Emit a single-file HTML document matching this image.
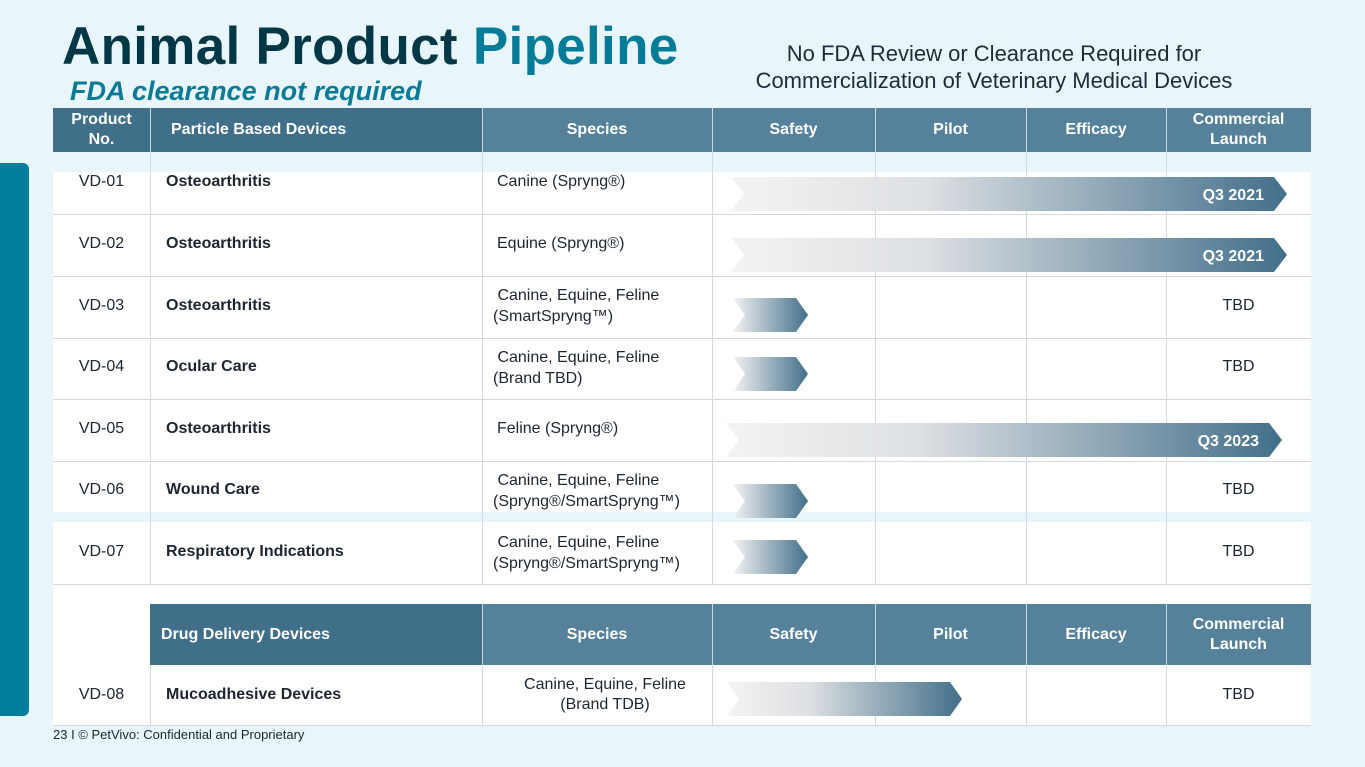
<!DOCTYPE html>
<html><head><meta charset="utf-8"><style>
*{margin:0;padding:0;box-sizing:border-box}
body{width:1365px;height:767px;background:#e8f6fc;position:relative;overflow:hidden;font-family:"Liberation Sans",sans-serif;color:#1c2530}
.a{position:absolute}
.h{position:absolute;color:#fff;font-weight:bold;font-size:16px;display:flex;align-items:center;justify-content:center;text-align:center;line-height:20px}
.c{position:absolute;font-size:16px;display:flex;align-items:center;line-height:20px}
.vl{position:absolute;width:1px;background:#d6d9dc}
.hl{position:absolute;height:1px;background:#d6d9dc}
.hv{position:absolute;width:1px;background:#c8d6de}
</style></head><body>
<div class="a" style="left:0;top:163px;width:29px;height:553px;background:#017e9b;border-radius:0 6px 6px 0"></div>
<div class="a" style="left:62px;top:16px;font-size:53px;font-weight:bold;color:#023845;letter-spacing:0.3px">Animal Product <span style="color:#047c98">Pipeline</span></div>
<div class="a" style="left:70px;top:76px;font-size:27px;font-weight:bold;font-style:italic;color:#0a7a96">FDA clearance not required</div>
<div class="a" style="left:700px;top:40px;width:588px;text-align:center;font-size:22px;line-height:27px;color:#1d2b3a">No FDA Review or Clearance Required for<br>Commercialization of Veterinary Medical Devices</div>

<div class="a" style="left:53px;top:172px;width:1258px;height:340px;background:#fff"></div>
<div class="a" style="left:53px;top:522px;width:1258px;height:82px;background:#fff"></div>
<div class="a" style="left:53px;top:604px;width:97px;height:121px;background:#fff"></div>
<div class="a" style="left:150px;top:665px;width:1161px;height:60px;background:#fff"></div>

<div class="h" style="left:53px;top:108px;width:97px;height:44px;background:#406f8a">Product<br>No.</div>
<div class="h" style="left:150px;top:108px;width:332px;height:44px;background:#406f8a;justify-content:flex-start;padding-left:21px">Particle Based Devices</div>
<div class="h" style="left:482px;top:108px;width:230px;height:44px;background:#55829a">Species</div>
<div class="h" style="left:712px;top:108px;width:163px;height:44px;background:#55829a">Safety</div>
<div class="h" style="left:875px;top:108px;width:151px;height:44px;background:#55829a">Pilot</div>
<div class="h" style="left:1026px;top:108px;width:140px;height:44px;background:#55829a">Efficacy</div>
<div class="h" style="left:1166px;top:108px;width:145px;height:44px;background:#55829a">Commercial<br>Launch</div>

<div class="h" style="left:150px;top:604px;width:332px;height:61px;background:#406f8a;justify-content:flex-start;padding-left:11px">Drug Delivery Devices</div>
<div class="h" style="left:482px;top:604px;width:230px;height:61px;background:#55829a">Species</div>
<div class="h" style="left:712px;top:604px;width:163px;height:61px;background:#55829a">Safety</div>
<div class="h" style="left:875px;top:604px;width:151px;height:61px;background:#55829a">Pilot</div>
<div class="h" style="left:1026px;top:604px;width:140px;height:61px;background:#55829a">Efficacy</div>
<div class="h" style="left:1166px;top:604px;width:145px;height:61px;background:#55829a">Commercial<br>Launch</div>

<div class="hv" style="left:150px;top:108px;height:44px"></div>
<div class="hv" style="left:482px;top:108px;height:44px"></div>
<div class="hv" style="left:712px;top:108px;height:44px"></div>
<div class="hv" style="left:875px;top:108px;height:44px"></div>
<div class="hv" style="left:1026px;top:108px;height:44px"></div>
<div class="hv" style="left:1166px;top:108px;height:44px"></div>
<div class="hv" style="left:482px;top:604px;height:61px"></div>
<div class="hv" style="left:712px;top:604px;height:61px"></div>
<div class="hv" style="left:875px;top:604px;height:61px"></div>
<div class="hv" style="left:1026px;top:604px;height:61px"></div>
<div class="hv" style="left:1166px;top:604px;height:61px"></div>

<div class="vl" style="left:150px;top:152px;height:432px"></div>
<div class="vl" style="left:482px;top:152px;height:432px"></div>
<div class="vl" style="left:712px;top:152px;height:432px"></div>
<div class="vl" style="left:875px;top:152px;height:432px"></div>
<div class="vl" style="left:1026px;top:152px;height:432px"></div>
<div class="vl" style="left:1166px;top:152px;height:432px"></div>
<div class="vl" style="left:150px;top:665px;height:60px"></div>
<div class="vl" style="left:482px;top:665px;height:60px"></div>
<div class="vl" style="left:712px;top:665px;height:60px"></div>
<div class="vl" style="left:875px;top:665px;height:60px"></div>
<div class="vl" style="left:1026px;top:665px;height:60px"></div>
<div class="vl" style="left:1166px;top:665px;height:60px"></div>
<div class="hl" style="left:53px;top:214px;width:1258px"></div>
<div class="hl" style="left:53px;top:276px;width:1258px"></div>
<div class="hl" style="left:53px;top:338px;width:1258px"></div>
<div class="hl" style="left:53px;top:399px;width:1258px"></div>
<div class="hl" style="left:53px;top:461px;width:1258px"></div>
<div class="hl" style="left:53px;top:584px;width:1258px"></div>
<div class="hl" style="left:53px;top:725px;width:1258px"></div>

<svg class="a" style="left:0;top:0" width="1365" height="767">
<defs><linearGradient id="g" x1="0" x2="1"><stop offset="0" stop-color="#f3f3f3"/><stop offset="0.35" stop-color="#dde0e3"/><stop offset="1" stop-color="#426f8a"/></linearGradient>
<linearGradient id="g2" x1="0" x2="1"><stop offset="0" stop-color="#f3f3f3"/><stop offset="1" stop-color="#426f8a"/></linearGradient></defs>
<polygon fill="url(#g)" points="731,177 1274,177 1287,194 1274,211 731,211 744,194"/>
<polygon fill="url(#g)" points="731,238 1274,238 1287,255 1274,272 731,272 744,255"/>
<polygon fill="url(#g)" points="726,423 1269,423 1282,440 1269,457 726,457 739,440"/>
<polygon fill="url(#g2)" points="733,298 796,298 808,315 796,332 733,332 745,315"/>
<polygon fill="url(#g2)" points="733,357 796,357 808,374 796,391 733,391 745,374"/>
<polygon fill="url(#g2)" points="733,484 796,484 808,501 796,518 733,518 745,501"/>
<polygon fill="url(#g2)" points="733,540 796,540 808,557 796,574 733,574 745,557"/>
<polygon fill="url(#g)" points="727,682 950,682 962,699 950,716 727,716 739,699"/>
<g fill="#fff" font-family="Liberation Sans" font-weight="bold" font-size="16">
<text x="1264" y="200" text-anchor="end">Q3 2021</text>
<text x="1264" y="261" text-anchor="end">Q3 2021</text>
<text x="1259" y="446" text-anchor="end">Q3 2023</text>
</g>
</svg>

<div class="c" style="left:53px;top:172px;width:97px;height:20px;justify-content:center">VD-01</div>
<div class="c" style="left:166px;top:172px;height:20px;font-weight:bold">Osteoarthritis</div>
<div class="c" style="left:497px;top:172px;height:20px">Canine (Spryng®)</div>

<div class="c" style="left:53px;top:234px;width:97px;height:20px;justify-content:center">VD-02</div>
<div class="c" style="left:166px;top:234px;height:20px;font-weight:bold">Osteoarthritis</div>
<div class="c" style="left:497px;top:234px;height:20px">Equine (Spryng®)</div>

<div class="c" style="left:53px;top:296px;width:97px;height:20px;justify-content:center">VD-03</div>
<div class="c" style="left:166px;top:296px;height:20px;font-weight:bold">Osteoarthritis</div>
<div class="c" style="left:493px;top:285px;display:block;line-height:21px">&nbsp;Canine, Equine, Feline<br>(SmartSpryng™)</div>
<div class="c" style="left:1166px;top:296px;width:145px;height:20px;justify-content:center">TBD</div>

<div class="c" style="left:53px;top:357px;width:97px;height:20px;justify-content:center">VD-04</div>
<div class="c" style="left:166px;top:357px;height:20px;font-weight:bold">Ocular Care</div>
<div class="c" style="left:493px;top:347px;display:block;line-height:21px">&nbsp;Canine, Equine, Feline<br>(Brand TBD)</div>
<div class="c" style="left:1166px;top:357px;width:145px;height:20px;justify-content:center">TBD</div>

<div class="c" style="left:53px;top:419px;width:97px;height:20px;justify-content:center">VD-05</div>
<div class="c" style="left:166px;top:419px;height:20px;font-weight:bold">Osteoarthritis</div>
<div class="c" style="left:497px;top:419px;height:20px">Feline (Spryng®)</div>

<div class="c" style="left:53px;top:480px;width:97px;height:20px;justify-content:center">VD-06</div>
<div class="c" style="left:166px;top:480px;height:20px;font-weight:bold">Wound Care</div>
<div class="c" style="left:493px;top:470px;display:block;line-height:21px">&nbsp;Canine, Equine, Feline<br>(Spryng®/SmartSpryng™)</div>
<div class="c" style="left:1166px;top:480px;width:145px;height:20px;justify-content:center">TBD</div>

<div class="c" style="left:53px;top:542px;width:97px;height:20px;justify-content:center">VD-07</div>
<div class="c" style="left:166px;top:542px;height:20px;font-weight:bold">Respiratory Indications</div>
<div class="c" style="left:493px;top:532px;display:block;line-height:21px">&nbsp;Canine, Equine, Feline<br>(Spryng®/SmartSpryng™)</div>
<div class="c" style="left:1166px;top:542px;width:145px;height:20px;justify-content:center">TBD</div>

<div class="c" style="left:53px;top:685px;width:97px;height:20px;justify-content:center">VD-08</div>
<div class="c" style="left:166px;top:685px;height:20px;font-weight:bold">Mucoadhesive Devices</div>
<div class="c" style="left:482px;top:675px;width:246px;display:block;text-align:center;line-height:20px">Canine, Equine, Feline<br>(Brand TDB)</div>
<div class="c" style="left:1166px;top:685px;width:145px;height:20px;justify-content:center">TBD</div>

<div class="a" style="left:53px;top:727px;font-size:13px;color:#1c2530">23 I © PetVivo: Confidential and Proprietary</div>
</body></html>
